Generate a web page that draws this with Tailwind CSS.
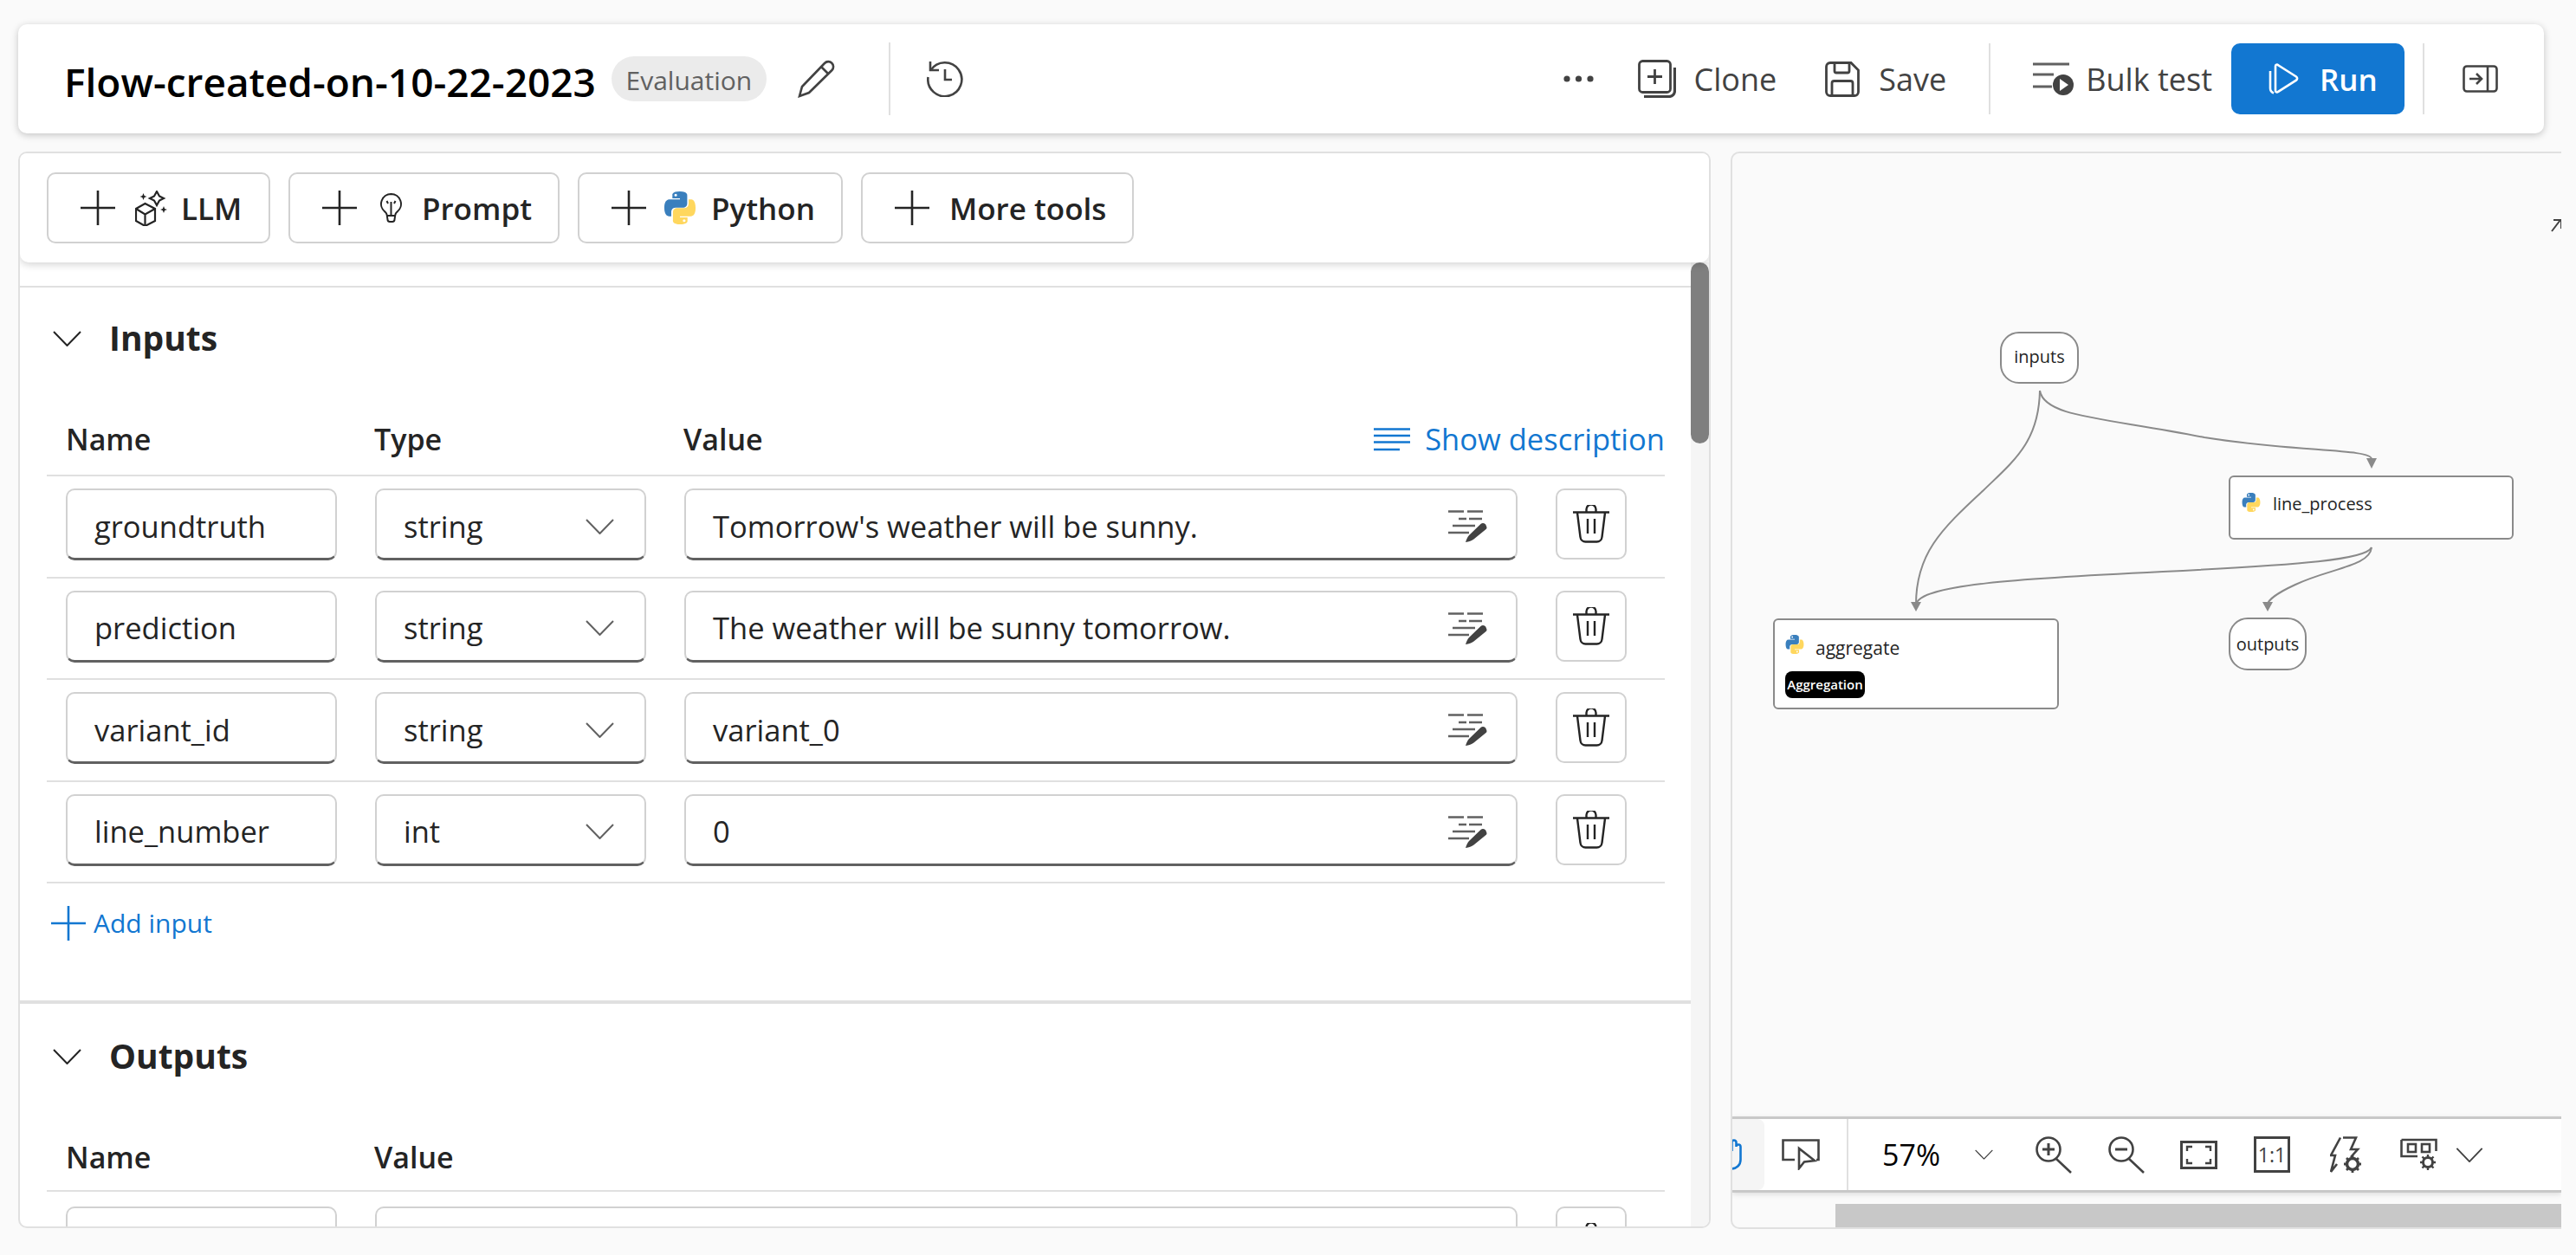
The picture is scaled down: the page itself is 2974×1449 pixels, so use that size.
<!DOCTYPE html>
<html lang="en">

<head>
    <meta charset="UTF-8">
    <title>Flow-created-on-10-22-2023</title>
    <script src="https://cdn.jsdelivr.net/npm/@tailwindcss/browser@4"></script>
</head>

<body class="bg-[#fafafa] font-['Open_Sans',sans-serif] text-[#242424] overflow-hidden">

    <!-- shared icons -->
    <svg class="hidden">
        <symbol id="plus" viewBox="0 0 40 40"><path d="M20 0V40M0 20H40" stroke="currentColor" stroke-width="2.6" fill="none" /></symbol>
        <symbol id="chevron" viewBox="0 0 33 18"><path d="M1 1L16.5 17L32 1" stroke="currentColor" stroke-width="2" fill="none" /></symbol>
        <symbol id="python" viewBox="0 0 24 24">
            <path fill="#3a7fbd" d="M11.9 0C6.1 0 6.5 2.5 6.5 2.5v2.6h5.5v.8H4.3S.6 5.5.6 11.9s3.2 6.2 3.2 6.2h1.9v-3s-.1-3.2 3.2-3.2h5.4s3 0 3-3V3.1S18 0 11.9 0zM8.9 1.7a1 1 0 110 2 1 1 0 010-2z" />
            <path fill="#ffd75e" d="M12.1 24c5.8 0 5.4-2.5 5.4-2.5v-2.6H12v-.8h7.7s3.7.4 3.7-6-3.2-6.2-3.2-6.2h-1.9v3s.1 3.2-3.2 3.2H9.9s-3 0-3 3v5.8S6 24 12.1 24zm3-1.7a1 1 0 110-2 1 1 0 010 2z" />
        </symbol>
        <symbol id="edit" viewBox="0 0 45 37">
            <path d="M0 1.5H18M22 1.5H40M12 10H21M24 10H39M5 18H31M0 26H24" stroke="#616161" stroke-width="2.4" fill="none" />
            <path fill="#424242" d="M44 18.5a4 4 0 0 0-6.5-2.5L24 29c-2 2-3 5-4 8 4-.5 7-1.5 9.5-3.5L43 22.5a3 3 0 0 0 1-4z" />
        </symbol>
        <symbol id="trash" viewBox="0 0 42 44">
            <path d="M0 8.5H42M15.5 8V5a5.5 5.5 0 0 1 11 0V8M5 9L8.5 37a6 6 0 0 0 6 5.5H27.5a6 6 0 0 0 6-5.5L37 9M17 16V33M25 16V33" stroke="#242424" stroke-width="2.4" fill="none" />
        </symbol>
    </svg>

    <div class="w-[2974px] h-[1449px] pt-[28px] pl-[21px] flex flex-col">

        <!-- top bar -->
        <header class="w-[2916px] h-[126px] shrink-0 bg-white rounded-[10px] shadow-[0_2px_8px_rgba(0,0,0,0.22)] flex items-center pl-[53px]">
            <h1 class="pt-[5px] text-[46px] leading-none font-semibold text-black whitespace-nowrap">Flow-created-on-10-22-2023</h1>
            <span class="ml-[18px] w-[179px] h-[52px] rounded-full bg-[#ebebeb] text-[#616161] text-[30px] font-medium flex items-center justify-center pt-[2px]">Evaluation</span>
            <svg class="ml-[36px] w-[44px] h-[44px]" viewBox="0 0 44 44" fill="none" stroke="#424242" stroke-width="2.6">
                <path d="M2 42l3-11L31 4a5.7 5.7 0 0 1 8.5 8L13 38z" />
                <path d="M27 8l8.5 8.5" />
            </svg>
            <div class="ml-[61px] w-[2px] h-[84px] bg-[#e0e0e0]"></div>
            <svg class="ml-[42px] w-[42px] h-[42px]" viewBox="0 0 42 42" fill="none" stroke="#424242" stroke-width="2.6">
                <path d="M4 1V11H14" />
                <path d="M4.5 11A19.5 19.5 0 1 1 1.5 19" />
                <path d="M21 10V22H29" />
            </svg>

            <div class="ml-auto flex items-center text-[#424242] text-[36px] font-medium">
                <svg class="w-[35px] h-[8px]" viewBox="0 0 35 8" fill="#424242">
                    <circle cx="4" cy="4" r="3.6" /><circle cx="17.5" cy="4" r="3.6" /><circle cx="31" cy="4" r="3.6" />
                </svg>
                <svg class="ml-[51px] w-[44px] h-[44px]" viewBox="0 0 44 44" fill="none" stroke="#424242" stroke-width="2.8">
                    <rect x="1.5" y="1.5" width="36" height="36" rx="4" />
                    <path d="M19.5 11V28M11 19.5H28" />
                    <path d="M42.5 9V36a6.5 6.5 0 0 1-6.5 6.5H7" stroke-width="3.2" />
                </svg>
                <span class="ml-[21px] leading-none pt-[2px]">Clone</span>
                <svg class="ml-[56px] w-[40px] h-[41px]" viewBox="0 0 40 41" fill="none" stroke="#424242" stroke-width="2.8">
                    <path d="M1.5 6a4.5 4.5 0 0 1 4.5-4.5H30L38.5 10V35a4.5 4.5 0 0 1-4.5 4.5H6A4.5 4.5 0 0 1 1.5 35z" />
                    <path d="M11 2V11a2 2 0 0 0 2 2H26a2 2 0 0 0 2-2V2" />
                    <path d="M8 39V25a2.5 2.5 0 0 1 2.5-2.5H29.5A2.5 2.5 0 0 1 32 25V39" />
                </svg>
                <span class="ml-[22px] leading-none pt-[2px]">Save</span>
                <div class="ml-[49px] w-[2px] h-[82px] bg-[#e0e0e0]"></div>
                <svg class="ml-[49px] w-[47px] h-[38px]" viewBox="0 0 47 38" fill="none">
                    <path d="M0 2H42M0 14H24M0 28H22" stroke="#616161" stroke-width="2.8" />
                    <circle cx="35" cy="26" r="12" fill="#424242" />
                    <path d="M31 19L41 26L31 33z" fill="#fff" />
                </svg>
                <span class="ml-[14px] leading-none pt-[2px]">Bulk test</span>
                <button class="ml-[22px] w-[200px] h-[82px] rounded-[10px] bg-[#1277d1] text-white font-semibold flex items-center pl-[43px]">
                    <svg class="w-[35px] h-[36px]" viewBox="0 0 35 36" fill="none" stroke="#fff" stroke-width="2.6">
                        <path d="M8 3.5c0-2 2-2.5 3.2-1.200L32 15.5c1.5 1.2 1.5 3 0 4.2L11.2 32.8C10 34 8 33.5 8 31.5z" />
                        <path d="M2 9V29c0 3 1.5 4.5 4 5.5" />
                    </svg>
                    <span class="ml-[24px] leading-none text-[35px]">Run</span>
                </button>
                <div class="ml-[21px] w-[2px] h-[82px] bg-[#e0e0e0]"></div>
                <svg class="ml-[44px] mr-[53px] w-[41px] h-[32px]" viewBox="0 0 41 32" fill="none" stroke="#424242" stroke-width="2.6">
                    <rect x="1.5" y="1.5" width="38" height="29" rx="3.5" />
                    <path d="M29 2V30" />
                    <path d="M8 16H22M16 10L22 16L16 22" />
                </svg>
            </div>
        </header>

        <main class="mt-[21px] flex gap-[23px] h-[1244px]">

            <!-- flow editor -->
            <section class="relative w-[1954px] h-[1243px] bg-white border-2 border-[#e0e0e0] rounded-[10px] overflow-hidden flex flex-col">
                <div class="relative z-10 h-[126px] shrink-0 bg-white rounded-b-[10px] shadow-[0_3px_8px_rgba(0,0,0,0.16)] flex items-center gap-[21px] pl-[31px] text-[35px] font-semibold">
                    <button class="w-[258px] h-[82px] border-2 border-[#d1d1d1] rounded-[10px] flex items-center pl-[37px]">
                        <svg class="w-[40px] h-[40px]"><use href="#plus" /></svg>
                        <svg class="ml-[23px] w-[37px] h-[41px]" viewBox="0 0 37 41" fill="none" stroke="#242424" stroke-width="2.2">
                            <path d="M11.5 15L23 21V35L11.5 41L1 35V21z" />
                            <path d="M1 21L11.5 27.5L23 21M11.5 27.5V41" />
                            <path d="M25 1L28 6.5L33 9L28 11.5L25 17L22 11.5L17 9L22 6.5z" />
                            <path fill="#242424" stroke="none" d="M9.5 3L10.7 6L13.5 7L10.7 8L9.5 11L8.3 8L5.5 7L8.3 6zM33 18L34.2 21L37 22L34.2 23L33 26L31.8 23L29 22L31.8 21z" />
                        </svg>
                        <span class="ml-[16px] leading-none">LLM</span>
                    </button>
                    <button class="w-[313px] h-[82px] border-2 border-[#d1d1d1] rounded-[10px] flex items-center pl-[37px]">
                        <svg class="w-[40px] h-[40px]"><use href="#plus" /></svg>
                        <svg class="ml-[27px] w-[25px] h-[34px]" viewBox="0 0 25 34" fill="none" stroke="#242424" stroke-width="2">
                            <path d="M12.5 1a11.5 11.5 0 0 1 7 20.6c-1.4 1.2-2 2.5-2.3 4l-.7 5a2.5 2.5 0 0 1-2.5 2.4h-3a2.5 2.5 0 0 1-2.5-2.4l-.7-5c-.3-1.5-1-2.8-2.3-4A11.5 11.5 0 0 1 12.5 1z" />
                            <path d="M7.5 26H17.5M12.5 10V25M7.5 9L9 12M17.5 9L16 12" />
                        </svg>
                        <span class="ml-[23px] leading-none">Prompt</span>
                    </button>
                    <button class="w-[306px] h-[82px] border-2 border-[#d1d1d1] rounded-[10px] flex items-center pl-[37px]">
                        <svg class="w-[40px] h-[40px]"><use href="#plus" /></svg>
                        <svg class="ml-[20px] w-[38px] h-[38px]"><use href="#python" /></svg>
                        <span class="ml-[17px] leading-none">Python</span>
                    </button>
                    <button class="w-[315px] h-[82px] border-2 border-[#d1d1d1] rounded-[10px] flex items-center pl-[37px]">
                        <svg class="w-[40px] h-[40px]"><use href="#plus" /></svg>
                        <span class="ml-[23px] leading-none">More tools</span>
                    </button>
                </div>

                <div class="flex-1 flex min-h-0">
                    <div class="flex-1 min-w-0 overflow-hidden pt-[27px]">

                        <!-- inputs -->
                        <div class="border-t-2 border-[#e0e0e0] pl-[31px] pr-[30px] pb-[36px]">
                            <div class="h-[118px] flex items-center pl-[7px]">
                                <svg class="w-[33px] h-[18px] text-[#242424]"><use href="#chevron" /></svg>
                                <h2 class="ml-[32px] mb-[3px] text-[39px] font-bold leading-none">Inputs</h2>
                            </div>
                            <div class="relative h-[100px] border-b-2 border-[#e0e0e0] pl-[22px] pb-[17px] grid grid-cols-[356px_357px_1fr] items-end text-[34px] font-semibold leading-[48px]">
                                <span>Name</span>
                                <span>Type</span>
                                <span>Value</span>
                                <div class="absolute right-0 bottom-[17px] flex items-center text-[#1277d1] font-normal">
                                    <svg class="w-[42px] h-[27px]" viewBox="0 0 42 27" fill="none" stroke="#1277d1" stroke-width="2.6">
                                        <path d="M0 1.5H42M0 9H42M0 16.5H42M0 25H30" />
                                    </svg>
                                    <span class="ml-[17px] text-[34.5px]">Show description</span>
                                </div>
                            </div>

                            <div class="h-[117.5px] border-b-2 border-[#e0e0e0] pl-[22px] pt-[14px] grid grid-cols-[313px_313px_962px_82px] gap-x-[44px] text-[34.5px]">
                                <div class="h-[83px] border-2 border-[#d1d1d1] border-b-[3px] border-b-[#616161] rounded-[10px] flex items-center pl-[31px] pr-[31px] pt-[5px]">groundtruth</div>
                                <div class="h-[83px] border-2 border-[#d1d1d1] border-b-[3px] border-b-[#616161] rounded-[10px] flex items-center justify-between pl-[31px] pr-[35px] pt-[5px]">string<svg class="w-[33px] h-[18px] text-[#616161]"><use href="#chevron" /></svg></div>
                                <div class="h-[83px] border-2 border-[#d1d1d1] border-b-[3px] border-b-[#616161] rounded-[10px] flex items-center justify-between pl-[31px] pr-[33px] pt-[5px]">Tomorrow's weather will be sunny.<svg class="w-[45px] h-[37px]"><use href="#edit" /></svg></div>
                                <button class="h-[82px] border-2 border-[#d1d1d1] rounded-[10px] flex items-center justify-center"><svg class="w-[42px] h-[44px]"><use href="#trash" /></svg></button>
                            </div>
                            <div class="h-[117.5px] border-b-2 border-[#e0e0e0] pl-[22px] pt-[14px] grid grid-cols-[313px_313px_962px_82px] gap-x-[44px] text-[34.5px]">
                                <div class="h-[83px] border-2 border-[#d1d1d1] border-b-[3px] border-b-[#616161] rounded-[10px] flex items-center pl-[31px] pr-[31px] pt-[5px]">prediction</div>
                                <div class="h-[83px] border-2 border-[#d1d1d1] border-b-[3px] border-b-[#616161] rounded-[10px] flex items-center justify-between pl-[31px] pr-[35px] pt-[5px]">string<svg class="w-[33px] h-[18px] text-[#616161]"><use href="#chevron" /></svg></div>
                                <div class="h-[83px] border-2 border-[#d1d1d1] border-b-[3px] border-b-[#616161] rounded-[10px] flex items-center justify-between pl-[31px] pr-[33px] pt-[5px]">The weather will be sunny tomorrow.<svg class="w-[45px] h-[37px]"><use href="#edit" /></svg></div>
                                <button class="h-[82px] border-2 border-[#d1d1d1] rounded-[10px] flex items-center justify-center"><svg class="w-[42px] h-[44px]"><use href="#trash" /></svg></button>
                            </div>
                            <div class="h-[117.5px] border-b-2 border-[#e0e0e0] pl-[22px] pt-[14px] grid grid-cols-[313px_313px_962px_82px] gap-x-[44px] text-[34.5px]">
                                <div class="h-[83px] border-2 border-[#d1d1d1] border-b-[3px] border-b-[#616161] rounded-[10px] flex items-center pl-[31px] pr-[31px] pt-[5px]">variant_id</div>
                                <div class="h-[83px] border-2 border-[#d1d1d1] border-b-[3px] border-b-[#616161] rounded-[10px] flex items-center justify-between pl-[31px] pr-[35px] pt-[5px]">string<svg class="w-[33px] h-[18px] text-[#616161]"><use href="#chevron" /></svg></div>
                                <div class="h-[83px] border-2 border-[#d1d1d1] border-b-[3px] border-b-[#616161] rounded-[10px] flex items-center justify-between pl-[31px] pr-[33px] pt-[5px]">variant_0<svg class="w-[45px] h-[37px]"><use href="#edit" /></svg></div>
                                <button class="h-[82px] border-2 border-[#d1d1d1] rounded-[10px] flex items-center justify-center"><svg class="w-[42px] h-[44px]"><use href="#trash" /></svg></button>
                            </div>
                            <div class="h-[117.5px] border-b-2 border-[#e0e0e0] pl-[22px] pt-[14px] grid grid-cols-[313px_313px_962px_82px] gap-x-[44px] text-[34.5px]">
                                <div class="h-[83px] border-2 border-[#d1d1d1] border-b-[3px] border-b-[#616161] rounded-[10px] flex items-center pl-[31px] pr-[31px] pt-[5px]">line_number</div>
                                <div class="h-[83px] border-2 border-[#d1d1d1] border-b-[3px] border-b-[#616161] rounded-[10px] flex items-center justify-between pl-[31px] pr-[35px] pt-[5px]">int<svg class="w-[33px] h-[18px] text-[#616161]"><use href="#chevron" /></svg></div>
                                <div class="h-[83px] border-2 border-[#d1d1d1] border-b-[3px] border-b-[#616161] rounded-[10px] flex items-center justify-between pl-[31px] pr-[33px] pt-[5px]">0<svg class="w-[45px] h-[37px]"><use href="#edit" /></svg></div>
                                <button class="h-[82px] border-2 border-[#d1d1d1] rounded-[10px] flex items-center justify-center"><svg class="w-[42px] h-[44px]"><use href="#trash" /></svg></button>
                            </div>

                            <div class="mt-[26px] h-[40px] pl-[5px] flex items-center text-[#1277d1] text-[30px]">
                                <svg class="w-[40px] h-[40px]"><use href="#plus" /></svg>
                                <span class="ml-[9px] leading-none">Add input</span>
                            </div>
                            <div class="h-[33px]"></div>
                        </div>

                        <!-- outputs -->
                        <div class="border-t-4 border-[#e0e0e0] pl-[31px] pr-[30px]">
                            <div class="h-[122px] flex items-center pl-[7px]">
                                <svg class="w-[33px] h-[18px] text-[#242424]"><use href="#chevron" /></svg>
                                <h2 class="ml-[32px] mb-[3px] text-[39px] font-bold leading-none">Outputs</h2>
                            </div>
                            <div class="h-[95px] border-b-2 border-[#e0e0e0] pl-[22px] pb-[14px] grid grid-cols-[356px_1fr] items-end text-[34px] font-semibold leading-[48px]">
                                <span>Name</span>
                                <span>Value</span>
                            </div>
                            <div class="h-[117.5px] pl-[22px] pt-[17px] grid grid-cols-[313px_1319px_82px] gap-x-[44px]">
                                <div class="h-[83px] border-2 border-[#d1d1d1] border-b-[3px] border-b-[#616161] rounded-[10px]"></div>
                                <div class="h-[83px] border-2 border-[#d1d1d1] border-b-[3px] border-b-[#616161] rounded-[10px]"></div>
                                <button class="h-[82px] border-2 border-[#d1d1d1] rounded-[10px] flex items-center justify-center"><svg class="w-[42px] h-[44px]"><use href="#trash" /></svg></button>
                            </div>
                        </div>
                    </div>

                    <!-- scrollbar -->
                    <div class="w-[21px] shrink-0 bg-[#f5f5f5]">
                        <div class="h-[209px] bg-[#7f7f7f] rounded-full"></div>
                    </div>
                </div>
            </section>

            <!-- graph view -->
            <section class="relative w-[959px] h-[1244px] border-t-2 border-l-2 border-b-2 border-[#e0e0e0] rounded-l-[10px] bg-[#fafafa] overflow-hidden flex flex-col">
                <div class="relative flex-1 min-h-0">
                    <svg class="absolute inset-0 w-[957px] h-[1110px]" viewBox="2000 177 957 1110" fill="none" stroke="#8a8a8a" stroke-width="2">
                        <path d="M2355 451C2354 510 2325 532 2290 566C2240 612 2212 640 2212 698" />
                        <path d="M2355 451C2360 482 2430 482 2545 505C2650 522 2738 518 2738 530" />
                        <path d="M2738 632C2732 646 2660 652 2497 660C2330 668 2216 675 2212 698" />
                        <path d="M2738 632C2736 654 2690 656 2650 675C2626 686 2618 694 2618 698" />
                        <path d="M2206 695L2218 695L2212 706z" fill="#8a8a8a" stroke="none" />
                        <path d="M2732 529L2744 529L2738 541z" fill="#8a8a8a" stroke="none" />
                        <path d="M2612 695L2624 695L2618 706z" fill="#8a8a8a" stroke="none" />
                        <path d="M2946 267L2956 254M2948 254H2957V264" stroke="#424242" />
                    </svg>

                    <div class="absolute left-[309px] top-[206px] w-[91px] h-[60px] bg-white border-2 border-[#8a8a8a] rounded-[22px] flex items-center justify-center text-[20px] leading-none text-[#242424] pb-[2px]">inputs</div>

                    <div class="absolute left-[573px] top-[372px] w-[329px] h-[74px] bg-white border-2 border-[#8a8a8a] rounded-[6px] pl-[13px] pt-[18px] flex items-start">
                        <svg class="w-[22px] h-[22px]"><use href="#python" /></svg>
                        <span class="ml-[14px] text-[20px] leading-[26px]">line_process</span>
                    </div>

                    <div class="absolute left-[47px] top-[537px] w-[330px] h-[105px] bg-white border-2 border-[#8a8a8a] rounded-[6px] pl-[12px] pt-[17px]">
                        <div class="flex items-start">
                            <svg class="w-[22px] h-[22px]"><use href="#python" /></svg>
                            <span class="ml-[13px] mt-[2px] text-[21px] leading-[26px]">aggregate</span>
                        </div>
                        <div class="mt-[14px] w-[92px] h-[31px] rounded-[8px] bg-black text-white text-[15px] font-semibold flex items-center justify-center leading-none">Aggregation</div>
                    </div>

                    <div class="absolute left-[573px] top-[536px] w-[90px] h-[61px] bg-white border-2 border-[#8a8a8a] rounded-[22px] flex items-center justify-center text-[20px] leading-none text-[#242424]">outputs</div>
                </div>

                <!-- graph toolbar -->
                <div class="h-[88px] shrink-0 bg-white border-y-[3px] border-[#c8c8c8] shadow-[0_2px_6px_rgba(0,0,0,0.12)] flex items-center text-[#424242]">
                    <div class="w-[37px] h-full bg-[#f5f5f5] rounded-r-[8px] flex items-center overflow-hidden">
                        <svg class="-ml-[2px] w-[14px] h-[36px] shrink-0" viewBox="0 0 14 36" fill="none" stroke="#1277d1" stroke-width="2.6">
                            <path d="M0 34.5C7 34.5 11.5 30 11.5 24V9a2.5 2.5 0 0 0-5 0M6.5 9V4a2.5 2.5 0 0 0-5 0V14" />
                        </svg>
                    </div>
                    <svg class="ml-[20px] w-[44px] h-[36px]" viewBox="0 0 44 36" fill="none" stroke="#424242" stroke-width="2.6">
                        <path d="M15 24H1.5V1.5H42.5V24H40" />
                        <path d="M20 11V34L26 26.5L38 25z" />
                    </svg>
                    <div class="ml-[31px] w-[2px] h-full bg-[#e0e0e0]"></div>
                    <span class="ml-[39px] w-[70px] text-[34px] leading-none text-black">57%</span>
                    <svg class="ml-[37px] w-[21px] h-[12px] text-[#424242]" viewBox="0 0 33 18"><use href="#chevron" /></svg>
                    <svg class="ml-[49px] w-[43px] h-[43px]" viewBox="0 0 43 43" fill="none" stroke="#424242" stroke-width="2.6">
                        <circle cx="15" cy="15" r="13.5" />
                        <path d="M8 15H22M15 8V22" stroke-width="3" />
                        <path d="M24 26L41 42" />
                    </svg>
                    <svg class="ml-[41px] w-[43px] h-[43px]" viewBox="0 0 43 43" fill="none" stroke="#424242" stroke-width="2.6">
                        <circle cx="15" cy="15" r="13.5" />
                        <path d="M8 15H22" stroke-width="3" />
                        <path d="M24 26L41 42" />
                    </svg>
                    <svg class="ml-[40px] w-[43px] h-[33px]" viewBox="0 0 43 33" fill="none" stroke="#424242" stroke-width="3">
                        <rect x="1.5" y="1.5" width="40" height="30" />
                        <path d="M8 12V7H14M29 7H35V12M8 21V26H14M29 26H35V21" stroke-width="2.4" />
                    </svg>
                    <div class="ml-[42px] w-[42px] h-[42px] border-[3px] border-[#424242] flex items-center justify-center text-[23px] leading-none">1:1</div>
                    <svg class="ml-[46px] w-[40px] h-[43px]" viewBox="0 0 40 43" fill="none" stroke="#424242" stroke-width="2.6">
                        <path d="M15 1.5H30L24 15H32L24 24M8 32L1 41L6 22H1L12 1.5" />
                        <circle cx="26" cy="32" r="6.5" stroke-width="3.5" />
                        <path d="M26 22V26M26 38V42M16 32H20M32 32H36M19 25L21.5 27.5M30.5 36.5L33 39M33 25L30.5 27.5M21.5 36.5L19 39" stroke-width="2.8" />
                    </svg>
                    <svg class="ml-[41px] w-[43px] h-[38px]" viewBox="0 0 43 38" fill="none" stroke="#424242" stroke-width="2.6">
                        <path d="M1.5 2H41.5V15M1.5 2V21H20" />
                        <rect x="9" y="7" width="9" height="9" />
                        <rect x="25" y="7" width="9" height="9" />
                        <circle cx="32" cy="28" r="5.5" stroke-width="3" />
                        <path d="M32 19V22.5M32 33.5V37M23 28H26.5M37.5 28H41M25.5 21.5L28 24M36 32L38.5 34.5M38.5 21.5L36 24M28 32L25.5 34.5" stroke-width="2.4" />
                    </svg>
                    <svg class="ml-[21px] w-[32px] h-[17px] text-[#424242]" viewBox="0 0 33 18"><use href="#chevron" /></svg>
                </div>

                <!-- horizontal scrollbar -->
                <div class="mt-[13px] h-[27px] shrink-0 pl-[119px]">
                    <div class="h-full bg-[#c8c8c8]"></div>
                </div>
            </section>
        </main>
    </div>

</body>

</html>
